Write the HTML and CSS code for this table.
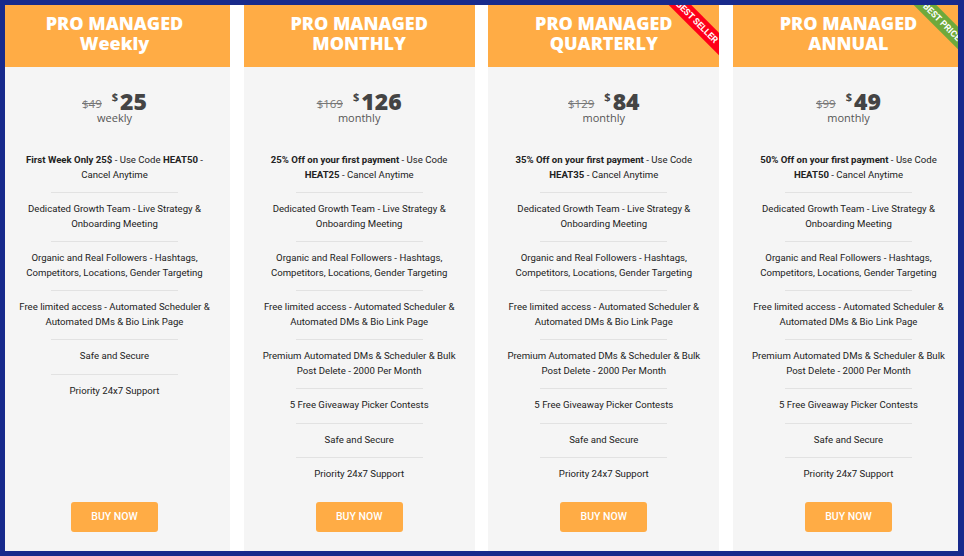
FILE: index.html
```html
<!DOCTYPE html>
<html lang="en">
<head>
<meta charset="utf-8">
<title>Pricing</title>
<link rel="stylesheet" href="styles.css">
</head>
<body>
<div class="frame"></div>
<main class="pricing">
  <section class="card">
    <header class="card-head"><h2>PRO MANAGED<br>Weekly</h2></header>
    <div class="card-body">
      <div class="price"><span class="old">$49</span><span class="cur">$</span><span class="amount">25</span></div>
      <div class="period">weekly</div>
      <ul class="features">
        <li><b>First Week Only 25$</b> - Use Code <b>HEAT50</b> - Cancel Anytime</li>
        <li>Dedicated Growth Team - Live Strategy &amp; Onboarding Meeting</li>
        <li>Organic and Real Followers - Hashtags, Competitors, Locations, Gender Targeting</li>
        <li>Free limited access - Automated Scheduler &amp; Automated DMs &amp; Bio Link Page</li>
        <li>Safe and Secure</li>
        <li>Priority 24x7 Support</li>
      </ul>
      <a class="buy" href="#">BUY NOW</a>
    </div>
  </section>
  <section class="card">
    <header class="card-head"><h2>PRO MANAGED<br>MONTHLY</h2></header>
    <div class="card-body">
      <div class="price"><span class="old">$169</span><span class="cur">$</span><span class="amount">126</span></div>
      <div class="period">monthly</div>
      <ul class="features">
        <li><b>25% Off on your first payment</b> - Use Code <b>HEAT25</b> - Cancel Anytime</li>
        <li>Dedicated Growth Team - Live Strategy &amp; Onboarding Meeting</li>
        <li>Organic and Real Followers - Hashtags, Competitors, Locations, Gender Targeting</li>
        <li>Free limited access - Automated Scheduler &amp; Automated DMs &amp; Bio Link Page</li>
        <li>Premium Automated DMs &amp; Scheduler &amp; Bulk Post Delete - 2000 Per Month</li>
        <li>5 Free Giveaway Picker Contests</li>
        <li>Safe and Secure</li>
        <li>Priority 24x7 Support</li>
      </ul>
      <a class="buy" href="#">BUY NOW</a>
    </div>
  </section>
  <section class="card">
    <header class="card-head"><h2>PRO MANAGED<br>QUARTERLY</h2></header>
    <div class="ribbon ribbon-red">BEST SELLER</div>
    <div class="card-body">
      <div class="price"><span class="old">$129</span><span class="cur">$</span><span class="amount">84</span></div>
      <div class="period">monthly</div>
      <ul class="features">
        <li><b>35% Off on your first payment</b> - Use Code <b>HEAT35</b> - Cancel Anytime</li>
        <li>Dedicated Growth Team - Live Strategy &amp; Onboarding Meeting</li>
        <li>Organic and Real Followers - Hashtags, Competitors, Locations, Gender Targeting</li>
        <li>Free limited access - Automated Scheduler &amp; Automated DMs &amp; Bio Link Page</li>
        <li>Premium Automated DMs &amp; Scheduler &amp; Bulk Post Delete - 2000 Per Month</li>
        <li>5 Free Giveaway Picker Contests</li>
        <li>Safe and Secure</li>
        <li>Priority 24x7 Support</li>
      </ul>
      <a class="buy" href="#">BUY NOW</a>
    </div>
  </section>
  <section class="card">
    <header class="card-head"><h2>PRO MANAGED<br>ANNUAL</h2></header>
    <div class="ribbon ribbon-green">BEST PRICE</div>
    <div class="card-body">
      <div class="price"><span class="old">$99</span><span class="cur">$</span><span class="amount">49</span></div>
      <div class="period">monthly</div>
      <ul class="features">
        <li><b>50% Off on your first payment</b> - Use Code <b>HEAT50</b> - Cancel Anytime</li>
        <li>Dedicated Growth Team - Live Strategy &amp; Onboarding Meeting</li>
        <li>Organic and Real Followers - Hashtags, Competitors, Locations, Gender Targeting</li>
        <li>Free limited access - Automated Scheduler &amp; Automated DMs &amp; Bio Link Page</li>
        <li>Premium Automated DMs &amp; Scheduler &amp; Bulk Post Delete - 2000 Per Month</li>
        <li>5 Free Giveaway Picker Contests</li>
        <li>Safe and Secure</li>
        <li>Priority 24x7 Support</li>
      </ul>
      <a class="buy" href="#">BUY NOW</a>
    </div>
  </section>
</main>
</body>
</html>
```
FILE: styles.css
```css
* { box-sizing: border-box; }
html, body { margin: 0; padding: 0; }
body {
  background: #ffffff;
  width: 964px;
  height: 556px;
  overflow: hidden;
  font-family: Roboto, "Liberation Sans", sans-serif;
}
.frame {
  position: fixed;
  inset: 0;
  border: 5px solid #172a8c;
  border-right-width: 6px;
  pointer-events: none;
  z-index: 10;
}
.pricing {
  display: flex;
  gap: 13.67px;
  margin-left: -1px;
  height: 556px;
}
.card {
  position: relative;
  flex: 0 0 231px;
  display: flex;
  flex-direction: column;
  background: #f5f5f5;
  overflow: hidden;
}
.card-head {
  background: #ffac45;
  padding: 12.5px 8px 14.5px;
}
.card-head h2 {
  margin: 0;
  color: #ffffff;
  font-family: "Open Sans", sans-serif;
  font-weight: 800;
  font-size: 18px;
  line-height: 20px;
  text-align: center;
}
.ribbon {
  position: absolute;
  top: 14px;
  right: -28px;
  width: 100px;
  height: 16px;
  transform: rotate(45deg);
  color: #ffffff;
  font-family: Roboto, sans-serif;
  font-weight: 700;
  font-size: 9px;
  line-height: 16px;
  text-align: center;
}
.ribbon-red { background: #ff0019; }
.ribbon-green { background: #6ea93b; }
.card-body {
  flex: 1;
  display: flex;
  flex-direction: column;
  align-items: center;
  padding-top: 24px;
}
.price {
  font-family: "Open Sans", sans-serif;
  line-height: 20px;
  color: #444444;
  text-align: center;
}
.old {
  font-size: 11.5px;
  color: #777777;
  text-decoration: line-through;
  margin-right: 10px;
  vertical-align: 2px;
}
.cur {
  font-size: 11px;
  line-height: 11px;
  font-weight: 700;
  vertical-align: top;
  margin-right: 2px;
}
.amount {
  font-size: 23px;
  font-weight: 800;
}
.period {
  font-family: "Open Sans", sans-serif;
  font-size: 11px;
  line-height: 13px;
  margin-top: -3px;
  color: #555555;
}
.features {
  list-style: none;
  margin: 19px 0 0;
  padding: 0;
  width: 197px;
  color: #222222;
  font-size: 9.6px;
  line-height: 14.5px;
  text-align: center;
}
.features li { padding: 10px 0; }
.features li + li { padding-top: 0; }
.features li + li::before {
  content: "";
  display: block;
  width: 127px;
  height: 1px;
  background: #e2e2e2;
  margin: 0 auto 9px;
}
.features b { font-weight: 700; }
.buy {
  margin: auto 0 24px;
  width: 87px;
  height: 30px;
  border-radius: 3px;
  background: #ffac45;
  color: #ffffff;
  font-family: Roboto, sans-serif;
  font-weight: 500;
  font-size: 10.5px;
  line-height: 30px;
  text-align: center;
  text-decoration: none;
}
```
